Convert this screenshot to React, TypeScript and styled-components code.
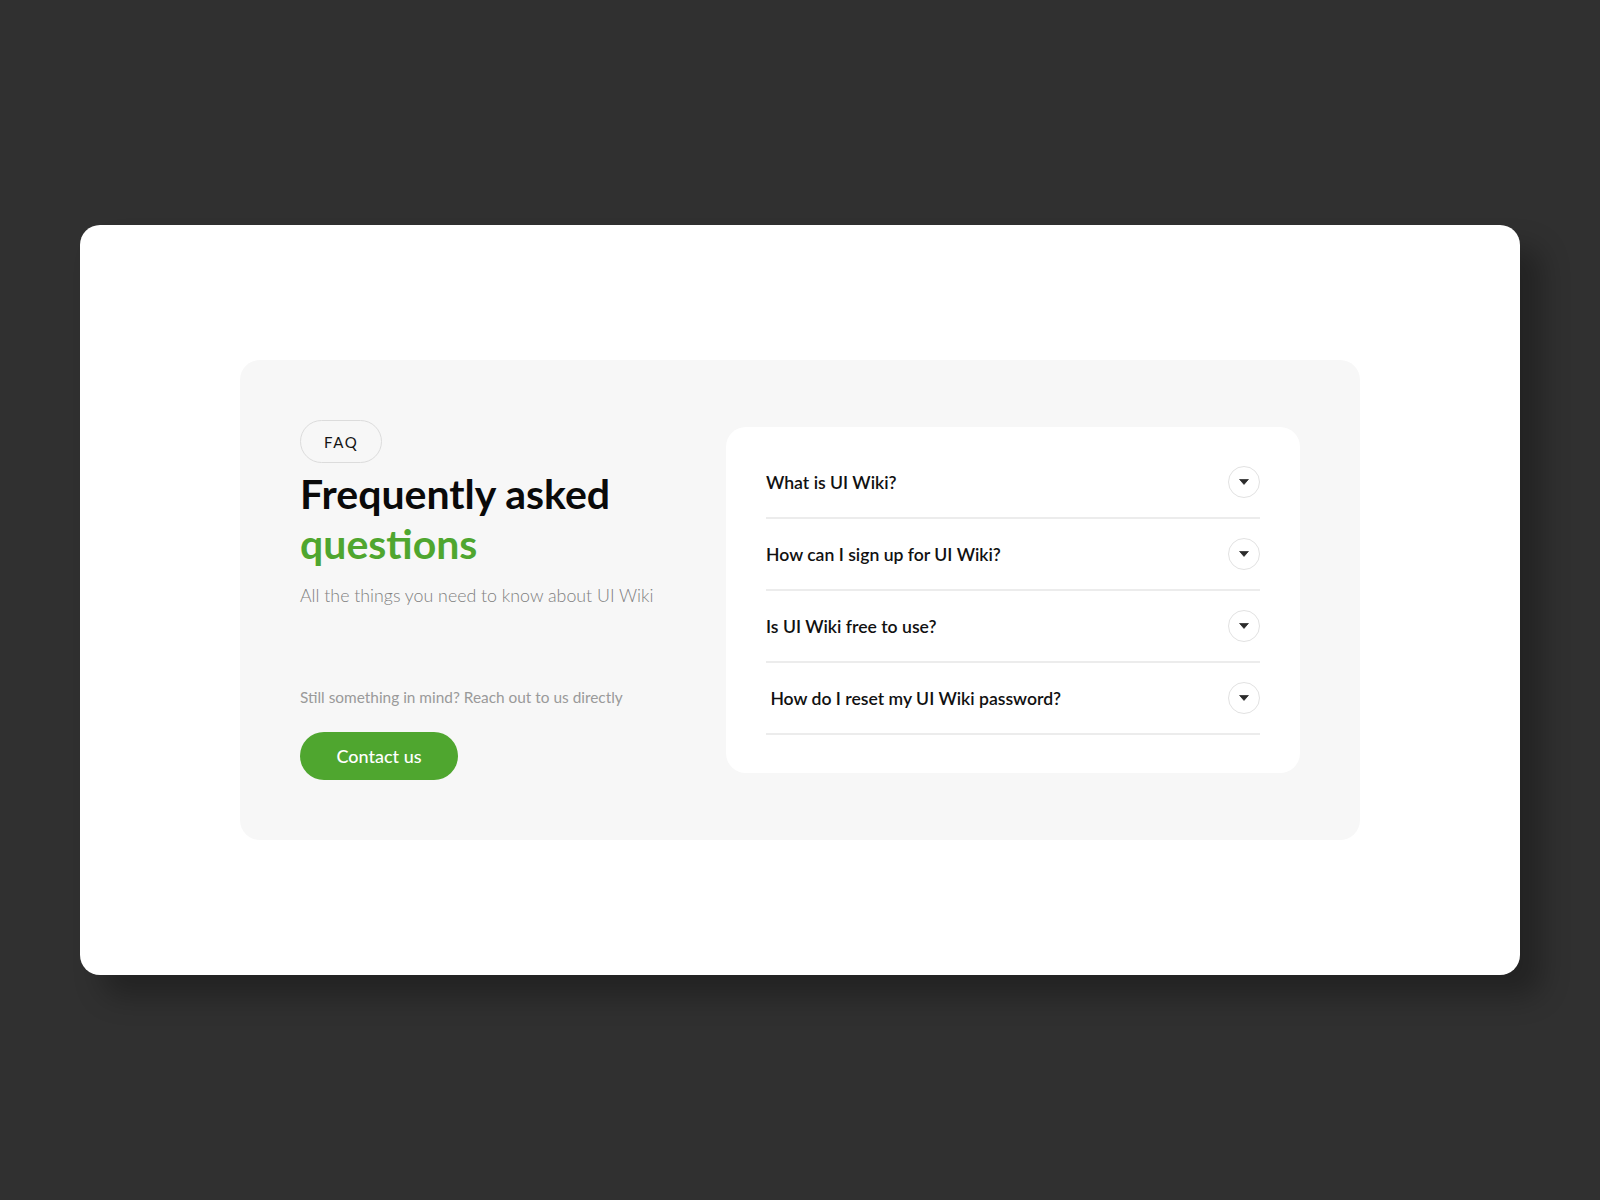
import styled, { createGlobalStyle } from "styled-components";

const GlobalStyle = createGlobalStyle`
    * { box-sizing: border-box; }
    body {
        margin: 0;
        background: #303030;
        font-family: "Lato", "Noto Sans", sans-serif;
    }
`

const Page = styled.div`
    height: 1200px;
    display: flex;
    align-items: center;
    justify-content: center;
`

const Card = styled.div`
    width: 1440px;
    height: 750px;
    background: #ffffff;
    border-radius: 20px;
    box-shadow: 22px 22px 28px rgba(0, 0, 0, 0.28);
    display: flex;
    align-items: center;
    justify-content: center;
`

const Panel = styled.section`
    width: 1120px;
    background: #f7f7f7;
    border-radius: 20px;
    padding: 60px;
    display: flex;
    align-items: center;
    justify-content: space-between;
`

const Intro = styled.div`
    display: flex;
    flex-direction: column;
    align-items: flex-start;
`

const Tag = styled.span`
    height: 43px;
    padding: 0 23px;
    border: 1px solid #dcdcdc;
    border-radius: 22px;
    display: flex;
    align-items: center;
    font-size: 15px;
    letter-spacing: 1.6px;
    color: #141414;
`

const Title = styled.h1`
    margin: 6px 0 0;
    font-size: 41px;
    line-height: 50px;
    font-weight: 700;
    color: #0a0a0a;
`

const Accent = styled.span`
    display: block;
    color: #4fa62f;
`

const Subtitle = styled.p`
    margin: 14px 0 0;
    font-size: 17.8px;
    line-height: 24px;
    font-weight: 300;
    color: #808080;
`

const Note = styled.p`
    margin: 80px 0 0;
    font-size: 15.4px;
    line-height: 20px;
    font-weight: 400;
    color: #9a9a9a;
`

const ContactButton = styled.button`
    margin-top: 25px;
    width: 158px;
    height: 48px;
    border: none;
    border-radius: 24px;
    background: #4fa62f;
    color: #ffffff;
    font-family: inherit;
    font-size: 18px;
    font-weight: 500;
    cursor: pointer;
`

const QuestionList = styled.ul`
    width: 574px;
    margin: 0;
    padding: 20px 40px 38px;
    list-style: none;
    background: #ffffff;
    border-radius: 20px;
`

const Question = styled.li`
    height: 72px;
    border-bottom: 2px solid #ececec;
    display: flex;
    align-items: center;
    justify-content: space-between;
    font-size: 17.6px;
    font-weight: 600;
    color: #111111;
`

const Toggle = styled.span`
    width: 32px;
    height: 32px;
    border: 1px solid #e2e2e2;
    border-radius: 50%;
    display: flex;
    align-items: center;
    justify-content: center;
`

const questions = [
    "What is UI Wiki?",
    "How can I sign up for UI Wiki?",
    "Is UI Wiki free to use?",
    "\u00a0How do I reset my UI Wiki password?",
]

function Caret() {
    return (
        <svg width="10" height="6" viewBox="0 0 10 6">
            <path d="M0.6 0.4h8.8L5 5.4z" fill="#2b2b2b" stroke="#2b2b2b" strokeWidth="0.8" strokeLinejoin="round" />
        </svg>
    )
}

function App() {
    return (
        <Page>
            <GlobalStyle />
            <Card>
                <Panel>
                    <Intro>
                        <Tag>FAQ</Tag>
                        <Title>
                            Frequently asked
                            <Accent>questions</Accent>
                        </Title>
                        <Subtitle>All the things you need to know about UI Wiki</Subtitle>
                        <Note>Still something in mind? Reach out to us directly</Note>
                        <ContactButton>Contact us</ContactButton>
                    </Intro>
                    <QuestionList>
                        {questions.map((q) => (
                            <Question key={q}>
                                {q}
                                <Toggle><Caret /></Toggle>
                            </Question>
                        ))}
                    </QuestionList>
                </Panel>
            </Card>
        </Page>
    )
}

export default App;
